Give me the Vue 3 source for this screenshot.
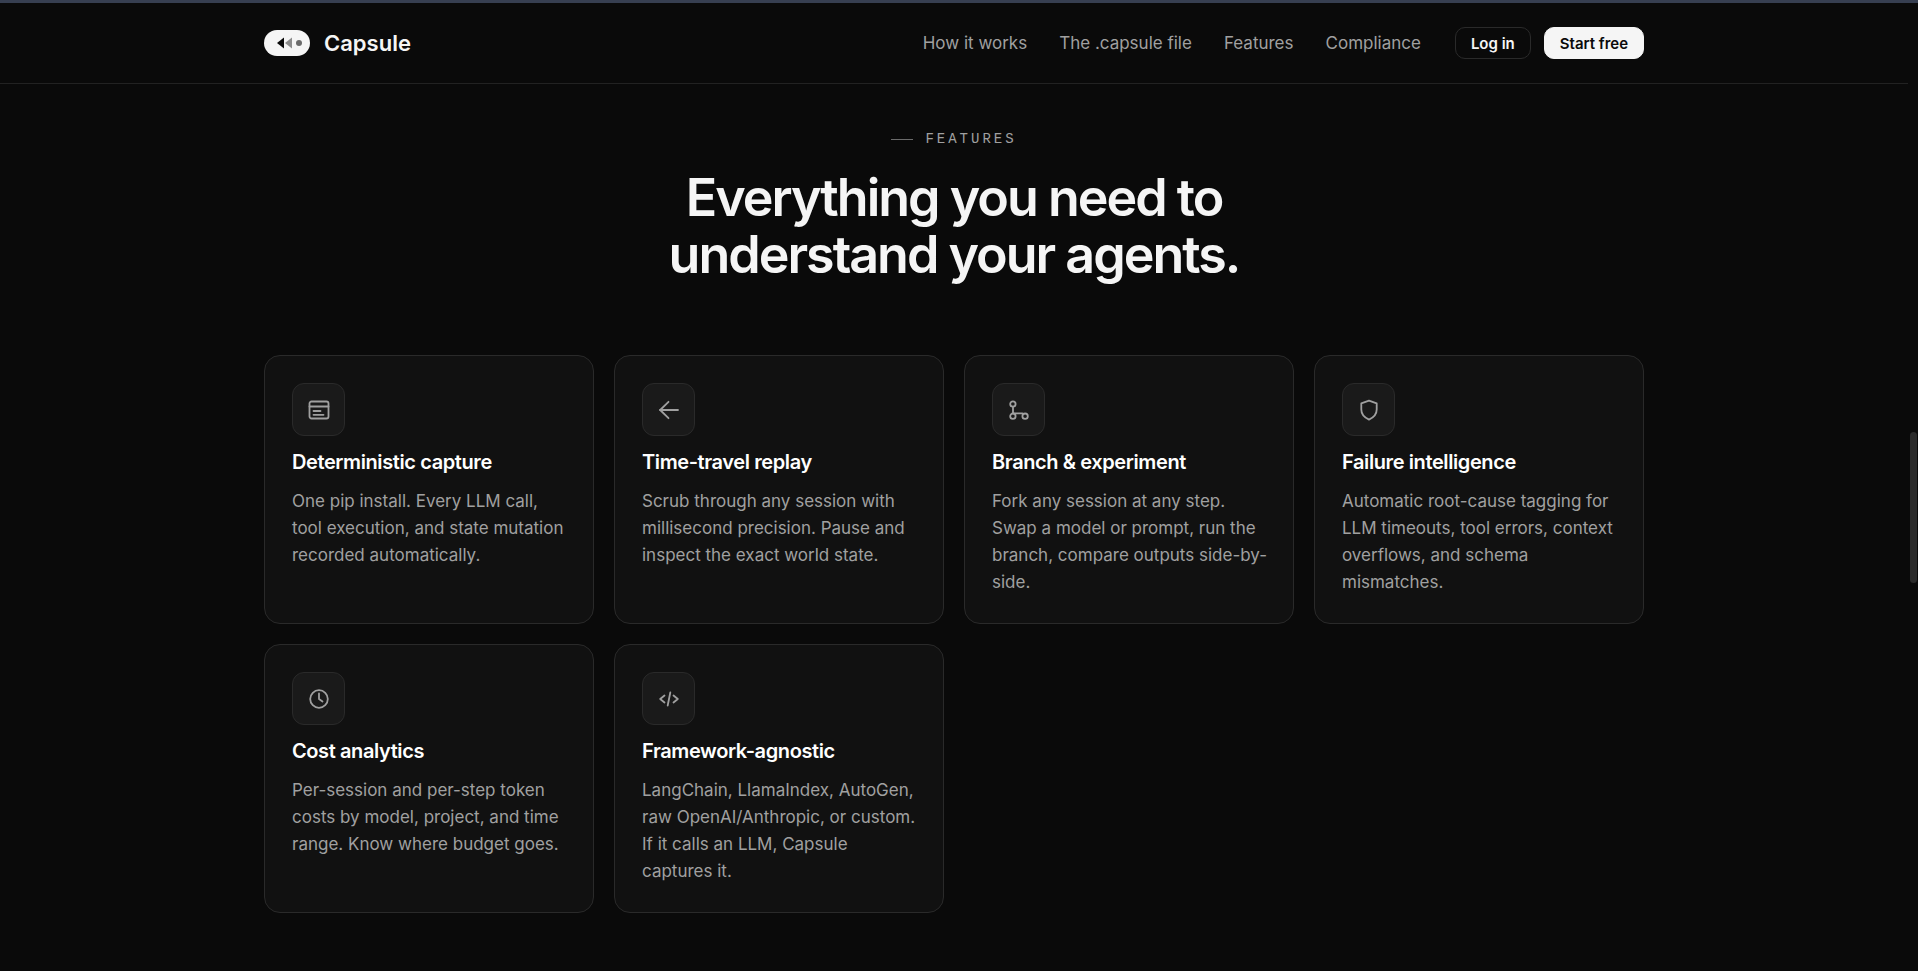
<!-- src/App.vue -->
<template>
  <div class="page">
    <header class="nav">
      <div class="container nav-inner">
        <a href="#" class="brand">
          <svg class="brand-mark" viewBox="0 0 46 26" aria-hidden="true">
            <rect width="46" height="26" rx="13" fill="#f5f5f5" />
            <path d="M13 13 20 7.5v11z" fill="#0a0a0a" />
            <path d="M21 13 28 7.5v11z" fill="#8c8c8c" />
            <circle cx="35" cy="13" r="3" fill="#6b6b6b" />
          </svg>
          <span>Capsule</span>
        </a>
        <nav class="nav-links">
          <a v-for="link in links" :key="link" href="#">{{ link }}</a>
        </nav>
        <div class="nav-actions">
          <button type="button" class="btn btn-ghost">Log in</button>
          <button type="button" class="btn btn-primary">Start free</button>
        </div>
      </div>
    </header>

    <main class="container features">
      <p class="eyebrow">Features</p>
      <h2 class="heading">Everything you need to<br />understand your agents.</h2>

      <div class="grid">
        <article v-for="feature in features" :key="feature.title" class="card">
          <div class="card-icon">
            <svg viewBox="0 0 24 24" aria-hidden="true">
              <path v-for="d in feature.icon" :key="d" :d="d" />
            </svg>
          </div>
          <h3>{{ feature.title }}</h3>
          <p>{{ feature.text }}</p>
        </article>
      </div>
    </main>

    <div class="scrollbar"></div>
  </div>
</template>

<script setup>
const links = ['How it works', 'The .capsule file', 'Features', 'Compliance'];

const features = [
  {
    title: 'Deterministic capture',
    text: 'One pip install. Every LLM call, tool execution, and state mutation recorded automatically.',
    icon: [
      'M4.5 3.5h15a2 2 0 0 1 2 2v13a2 2 0 0 1-2 2h-15a2 2 0 0 1-2-2v-13a2 2 0 0 1 2-2z',
      'M2.5 8.5h19',
      'M6.5 13h7',
      'M6.5 16.8h10'
    ]
  },
  {
    title: 'Time-travel replay',
    text: 'Scrub through any session with millisecond precision. Pause and inspect the exact world state.',
    icon: ['M21 12H3', 'M11.5 3.8 3.2 12l8.3 8.2']
  },
  {
    title: 'Branch & experiment',
    text: 'Fork any session at any step. Swap a model or prompt, run the branch, compare outputs side-by-side.',
    icon: [
      'M3.2 6a2.7 2.7 0 1 0 5.4 0 2.7 2.7 0 1 0-5.4 0',
      'M3.2 18.2a2.7 2.7 0 1 0 5.4 0 2.7 2.7 0 1 0-5.4 0',
      'M15.4 18.2a2.7 2.7 0 1 0 5.4 0 2.7 2.7 0 1 0-5.4 0',
      'M6 8.7v6.6h9.5'
    ]
  },
  {
    title: 'Failure intelligence',
    text: 'Automatic root-cause tagging for LLM timeouts, tool errors, context overflows, and schema mismatches.',
    icon: ['M12 2.7 19.7 5.4v6.2c0 4.800-3 8-7.700 10-4.700-2-7.700-5.200-7.700-10V5.400z']
  },
  {
    title: 'Cost analytics',
    text: 'Per-session and per-step token costs by model, project, and time range. Know where budget goes.',
    icon: ['M3.2 12a8.8 8.8 0 1 0 17.6 0 8.8 8.8 0 1 0-17.6 0', 'M12 6.5V12l3.5 2.5']
  },
  {
    title: 'Framework-agnostic',
    text: 'LangChain, LlamaIndex, AutoGen, raw OpenAI/Anthropic, or custom. If it calls an LLM, Capsule captures it.',
    icon: ['M7.5 8.5 3.2 12l4.3 3.5', 'M16.5 8.5 20.8 12l-4.3 3.5', 'M13.3 5.5l-2.6 13']
  }
];
</script>

<style>
body {
  background: #0a0a0a;
}
</style>

<style scoped>
.page {
  min-height: 100vh;
  box-sizing: border-box;
  padding-right: 10px;
  border-top: 3px solid #373f51;
  background: #0a0a0a;
  color: #f5f5f5;
  font-family: Inter, "Liberation Sans", sans-serif;
}

.scrollbar {
  position: fixed;
  top: 432px;
  right: 1px;
  width: 7px;
  height: 151px;
  border-radius: 4px;
  background: #2a2a2a;
}

.container {
  box-sizing: border-box;
  width: 100%;
  max-width: 1380px;
  margin: 0 auto;
}

.nav {
  border-bottom: 1px solid #222;
}

.nav-inner {
  display: flex;
  align-items: center;
  height: 80px;
}

.brand {
  display: flex;
  align-items: center;
  gap: 14px;
  margin-right: auto;
  color: #f5f5f5;
  font-size: 22px;
  font-weight: 600;
  text-decoration: none;
}

.brand-mark {
  width: 46px;
  height: 26px;
}

.nav-links {
  display: flex;
  gap: 32px;
  margin-right: 34px;
}

.nav-links a {
  color: #a0a0a0;
  font-size: 17px;
  text-decoration: none;
}

.nav-actions {
  display: flex;
  gap: 13px;
}

.btn {
  height: 32px;
  padding: 0 15px;
  border: 1px solid #2a2a2a;
  border-radius: 10px;
  font-family: inherit;
  font-size: 15px;
  font-weight: 600;
  cursor: pointer;
}

.btn-ghost {
  background: transparent;
  color: #f5f5f5;
}

.btn-primary {
  border-color: #f5f5f5;
  background: #f5f5f5;
  color: #0a0a0a;
}

.features {
  padding: 46px 0 52px;
}

.eyebrow {
  display: flex;
  align-items: center;
  justify-content: center;
  gap: 12px;
  margin: 0 0 21px;
  color: #a0a0a0;
  font-family: "Liberation Mono", monospace;
  font-size: 14px;
  line-height: 18px;
  letter-spacing: 3px;
  text-transform: uppercase;
}

.eyebrow::before {
  content: "";
  width: 22px;
  height: 1px;
  background: #6b6b6b;
}

.heading {
  margin: 0 0 72px;
  font-size: 52px;
  font-weight: 600;
  line-height: 57px;
  letter-spacing: -2px;
  text-align: center;
}

.grid {
  display: grid;
  grid-template-columns: repeat(4, 1fr);
  gap: 20px;
}

.card {
  padding: 27px 24px 27px 27px;
  border: 1px solid #2a2a2a;
  border-radius: 16px;
  background: #111;
}

.card-icon {
  display: flex;
  align-items: center;
  justify-content: center;
  box-sizing: border-box;
  width: 53px;
  height: 53px;
  margin-bottom: 12px;
  border: 1px solid #2a2a2a;
  border-radius: 12px;
  background: #1a1a1a;
}

.card-icon svg {
  width: 24px;
  height: 24px;
  fill: none;
  stroke: #a0a0a0;
  stroke-width: 1.8;
  stroke-linecap: round;
  stroke-linejoin: round;
}

.card h3 {
  margin: 0 0 12px;
  color: #fff;
  font-size: 20px;
  font-weight: 600;
  line-height: 28px;
  letter-spacing: -0.02em;
}

.card p {
  margin: 0;
  color: #a0a0a0;
  font-size: 17px;
  line-height: 27px;
}

@media (max-width: 1400px) {
  .container {
    padding-left: 24px;
    padding-right: 24px;
  }

  .grid {
    grid-template-columns: repeat(2, 1fr);
  }
}
</style>
